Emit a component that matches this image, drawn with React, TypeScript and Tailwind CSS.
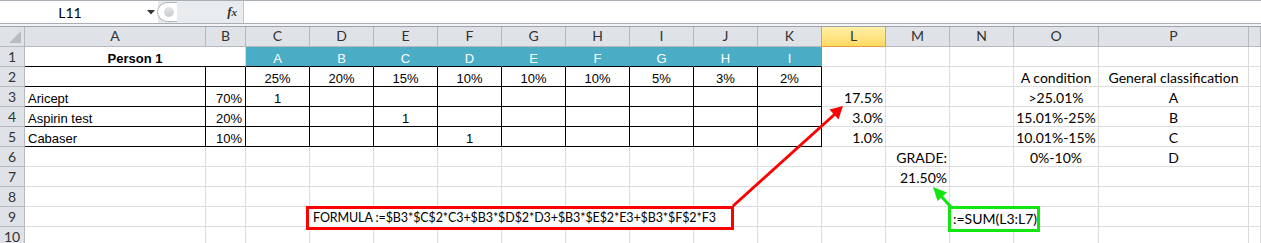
const COLS = ["A", "B", "C", "D", "E", "F", "G", "H", "I", "J", "K", "L", "M", "N", "O", "P", "Q"];
const ROWS = [1, 2, 3, 4, 5, 6, 7, 8, 9, 10];

const DATA: Record<string, string> = {
  C1: "A", D1: "B", E1: "C", F1: "D", G1: "E", H1: "F", I1: "G", J1: "H", K1: "I",
  C2: "25%", D2: "20%", E2: "15%", F2: "10%", G2: "10%", H2: "10%", I2: "5%", J2: "3%", K2: "2%",
  O2: "A condition", P2: "General classification",
  A3: "Aricept", B3: "70%", C3: "1", L3: "17.5%", O3: ">25.01%", P3: "A",
  A4: "Aspirin test", B4: "20%", E4: "1", L4: "3.0%", O4: "15.01%-25%", P4: "B",
  A5: "Cabaser", B5: "10%", F5: "1", L5: "1.0%", O5: "10.01%-15%", P5: "C",
  M6: "GRADE:", O6: "0%-10%", P6: "D",
  M7: "21.50%",
};

const ALIGN: Record<string, string> = {
  A: "justify-start pl-[3px]",
  B: "justify-end pr-[3px]",
  L: "justify-end pr-[2px]",
  M: "justify-end pr-[2px]",
  N: "justify-start pl-[3px]",
  O: "justify-center",
  P: "justify-center",
  Q: "justify-start",
};

const arial = "font-['Liberation_Sans',Arial,sans-serif] text-[13px] leading-[15px]";
const calibri = "font-['Lato',sans-serif] text-[14px] leading-[16px]";

function Cell({ col, row }: { col: string; row: number }) {
  const ci = COLS.indexOf(col);
  const inTable = ci <= 10;
  const text = DATA[`${col}${row}`] ?? "";
  const teal = row === 1 && ci >= 2 && ci <= 10;

  let r = "border-r-[#dadcdd]";
  let b = "border-b-[#dadcdd]";
  if (inTable && row >= 2 && row <= 5) {
    r = "border-r-black";
    b = "border-b-black";
  }
  if (inTable && row === 1) b = "border-b-black";
  if (teal) r = "border-r-[#4bacc6]";

  const font = ci <= 10 ? arial : calibri;
  const align = ALIGN[col] ?? "justify-center";

  return (
    <div
      className={`h-[20px] border-r border-b ${r} ${b} flex items-end overflow-hidden whitespace-nowrap ${align} ${font} ${
        teal ? "bg-[#4bacc6] text-white" : "text-black"
      }`}
    >
      {text}
    </div>
  );
}

function ColHeader({ k }: { k: string }) {
  if (k === "L") {
    return (
      <div className="h-[20px] flex items-end justify-center pb-[2px] bg-gradient-to-b from-[#fff0a6] to-[#ffd960] border-r border-b border-l border-[#e2a13a] -ml-[1px] font-['Lato',sans-serif] text-[14px] leading-[16px] text-[#333]">
        {k}
      </div>
    );
  }
  return (
    <div className="h-[20px] flex items-end justify-center pb-[2px] bg-[#dfe3e8] border-r border-b border-r-[#b6babf] border-b-[#b6babf] font-['Lato',sans-serif] text-[14px] leading-[16px] text-[#333] overflow-hidden">
      {k === "Q" ? "" : k}
    </div>
  );
}

function FormulaBar() {
  return (
    <div className="h-[27px] bg-[#f3f4f6] flex flex-col">
      <div className="h-[24px] flex border-t border-b border-[#a9aeb4] bg-white">
        {/* Name box */}
        <div className="w-[158px] relative flex items-center font-['Lato',sans-serif] text-[14px] text-black">
          <span className="w-[140px] text-center">L11</span>
          <svg className="absolute left-[147px] top-[9px]" width="8" height="5" viewBox="0 0 8 5">
            <polygon points="0,0 8,0 4,4.5" fill="#333" />
          </svg>
        </div>
        {/* grip + fx */}
        <div className="w-[86px] flex items-center bg-[#e9ecef] border-r border-[#c4c8cc]">
          <div className="h-[20px] w-[20px] -ml-[1px] rounded-l-full bg-white border-l border-t border-b border-[#b2b7bd] flex items-center justify-center">
            <div className="w-[10px] h-[10px] rounded-full bg-gradient-to-b from-[#e4e6e9] to-[#c9ccd0] ml-[3px]" />
          </div>
          <div className="flex-1" />
          <span className="font-['Liberation_Serif',serif] italic font-bold text-[13px] text-[#333] pr-[6px]">
            f<span className="text-[11px]">x</span>
          </span>
        </div>
        <div className="flex-1 bg-white" />
      </div>
      <div className="flex-1 border-b border-[#9ea3a9]" />
    </div>
  );
}

export default function App() {
  return (
    <div className="w-[1261px] h-[243px] overflow-hidden bg-white relative select-none">
      <FormulaBar />

      <div className="grid grid-cols-[25px_181px_40px_repeat(12,64px)_85px_150px_1fr]">
        {/* corner */}
        <div className="h-[20px] bg-[#dfe3e8] border-r border-b border-[#b6babf] relative">
          <svg className="absolute right-[3px] bottom-[3px]" width="12" height="12" viewBox="0 0 12 12">
            <polygon points="12,0 12,12 0,12" fill="#b9bdc2" />
          </svg>
        </div>
        {COLS.map((k) => (
          <ColHeader key={k} k={k} />
        ))}

        {ROWS.map((row) => (
          <div key={row} className="contents">
            <div className="h-[20px] bg-[#dfe3e8] border-r border-b border-[#b6babf] flex items-end justify-center pb-[1px] font-['Lato',sans-serif] text-[14px] leading-[16px] text-[#333]">
              {row}
            </div>
            {row === 1 ? (
              <>
                <div className="col-span-2 h-[20px] border-r border-b border-r-[#dadcdd] border-b-black flex items-end justify-center font-['Liberation_Sans',Arial,sans-serif] text-[13px] leading-[15px] font-bold text-black">
                  Person 1
                </div>
                {COLS.slice(2).map((c) => (
                  <Cell key={c} col={c} row={row} />
                ))}
              </>
            ) : (
              COLS.map((c) => <Cell key={c} col={c} row={row} />)
            )}
          </div>
        ))}
      </div>

      {/* callout boxes */}
      <div className="absolute left-[306px] top-[206px] w-[428px] h-[24px] border-[3px] border-[#ff0000] bg-white flex items-center pl-[4px] font-['Lato',sans-serif] text-[12.5px] tracking-[-0.1px] leading-[16px] text-black whitespace-nowrap">
        FORMULA :=$B3*$C$2*C3+$B3*$D$2*D3+$B3*$E$2*E3+$B3*$F$2*F3
      </div>
      <div className="absolute left-[948px] top-[206px] w-[92px] h-[26px] border-[3px] border-[#11e611] bg-white flex items-center pl-[2px] font-['Lato',sans-serif] text-[14px] leading-[16px] text-black whitespace-nowrap">
        :=SUM(L3:L7)
      </div>

      {/* arrows */}
      <svg className="absolute left-0 top-0 pointer-events-none" width="1261" height="243" viewBox="0 0 1261 243">
        <line x1="733" y1="206" x2="835" y2="114" stroke="#ff0000" strokeWidth="3" />
        <polygon points="843,106 838.5,119.5 829.5,109.5" fill="#ff0000" />
        <line x1="951" y1="207" x2="941" y2="196" stroke="#11e611" strokeWidth="3" />
        <polygon points="933,187 947,192.5 937.5,201" fill="#11e611" />
      </svg>
    </div>
  );
}
